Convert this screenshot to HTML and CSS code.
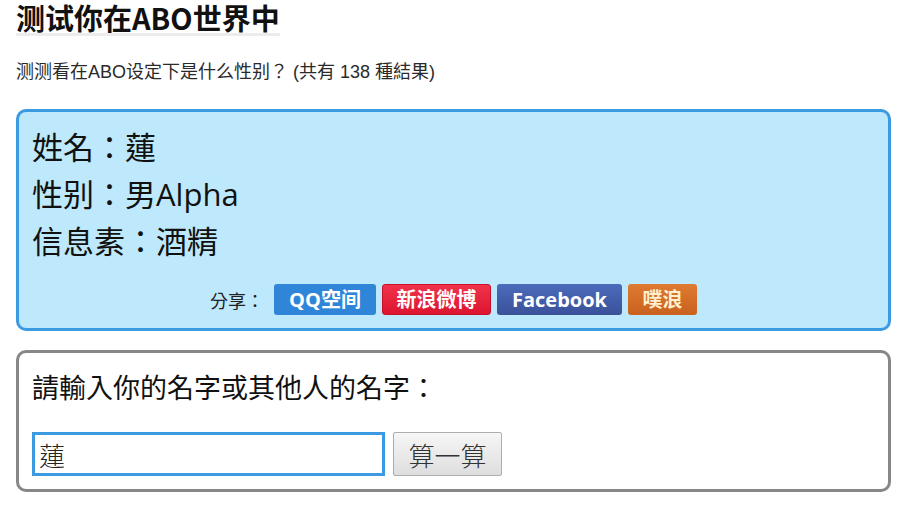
FILE: index.html
```html
<!DOCTYPE html>
<html lang="zh-TW">
<head>
  <meta charset="UTF-8">
  <meta name="viewport" content="width=device-width, initial-scale=1.0">
  <title>测试你在ABO世界中</title>
  <link rel="stylesheet" href="styles.css">
</head>
<body>
  <header>
    <h1>测试你在ABO世界中</h1>
    <p class="intro">测测看在ABO设定下是什么性别？ (共有 138 種結果)</p>
  </header>
  <div class="result">
    <div class="result-line">姓名：蓮</div>
    <div class="result-line">性别：男Alpha</div>
    <div class="result-line">信息素：酒精</div>
    <div class="share">
      <span class="share-label">分享：</span>
      <a class="share-btn qq" href="#">QQ空间</a>
      <a class="share-btn weibo" href="#">新浪微博</a>
      <a class="share-btn fb" href="#">Facebook</a>
      <a class="share-btn plurk" href="#">噗浪</a>
    </div>
  </div>
  <form class="ask">
    <label for="nameInput">請輸入你的名字或其他人的名字：</label>
    <div class="ask-row">
      <input id="nameInput" type="text" value="蓮">
      <button type="button">算一算</button>
    </div>
  </form>
</body>
</html>
```
FILE: styles.css
```css
html, body {
  margin: 0; padding: 0;
  background: #fff; color: #111;
  font-family: "Liberation Sans", "Noto Sans CJK TC", sans-serif;
}
body { padding: 0 16px; }
header { padding-top: 2px; }
header h1 {
  display: inline-block;
  margin: 0; padding: 0;
  font-size: 29px; font-weight: bold;
  font-family: "Noto Sans CJK SC", sans-serif;
  border-bottom: 3px solid #ececec;
  line-height: 31px;
}
.intro {
  margin: 24px 0 0;
  font-size: 18px; line-height: 24px; color: #2a2a2a;
  font-family: "Liberation Sans", "Noto Sans CJK TC", sans-serif;
}
.result {
  margin-top: 25px;
  background: #bee8fc;
  border: 3px solid #3c9be0;
  border-radius: 10px;
  padding: 12px 13px 13px;
}
.result-line {
  font-family: "Open Sans", "Noto Sans CJK TC", sans-serif;
  font-size: 31px; line-height: 47px; color: #111;
}
.share {
  display: flex; justify-content: center; align-items: center;
  gap: 6px; margin-top: 19px;
}
.share-label {
  font-size: 18px; color: #222; margin-right: 4px;
  font-family: "Noto Sans CJK TC", sans-serif;
}
.share-btn {
  display: inline-block; height: 31px; line-height: 31px;
  border-radius: 3px; box-sizing: border-box;
  color: #fff; text-decoration: none; text-align: center;
  font-size: 20px; font-weight: bold;
  font-family: "Open Sans", "Noto Sans CJK SC", sans-serif;
}
.qq { background: #2f86d8; width: 102px; }
.weibo {
  background: linear-gradient(#f0334a, #dd1530);
  border: 1px solid #c8102a; line-height: 29px; width: 109px;
}
.fb { background: linear-gradient(#4b6bbb, #3a5299); width: 125px; }
.plurk { background: linear-gradient(#de7a32, #c9611e); color: #ffefcf; width: 69px; }
.ask {
  margin-top: 19px;
  border: 3px solid #878787;
  border-radius: 10px;
  padding: 18px 13px 13px;
}
.ask label {
  display: block;
  font-family: "Noto Sans CJK TC", sans-serif;
  font-size: 27px; line-height: 32px; color: #111;
}
.ask-row { display: flex; align-items: center; gap: 8px; margin-top: 29px; }
.ask input {
  width: 353px; height: 44px; box-sizing: border-box;
  border: 3px solid #3c9be0; outline: none;
  font-size: 26px; padding: 0 4px;
  font-family: "Noto Sans CJK TC", serif; font-weight: 300; color: #222;
}
.ask button {
  width: 109px; height: 44px; padding: 0;
  border: 1px solid #adadad; border-radius: 2px;
  background: linear-gradient(#f6f6f6, #dedede);
  font-size: 26px; font-weight: 300; color: #333;
  font-family: "Noto Sans CJK TC", serif;
}
```
